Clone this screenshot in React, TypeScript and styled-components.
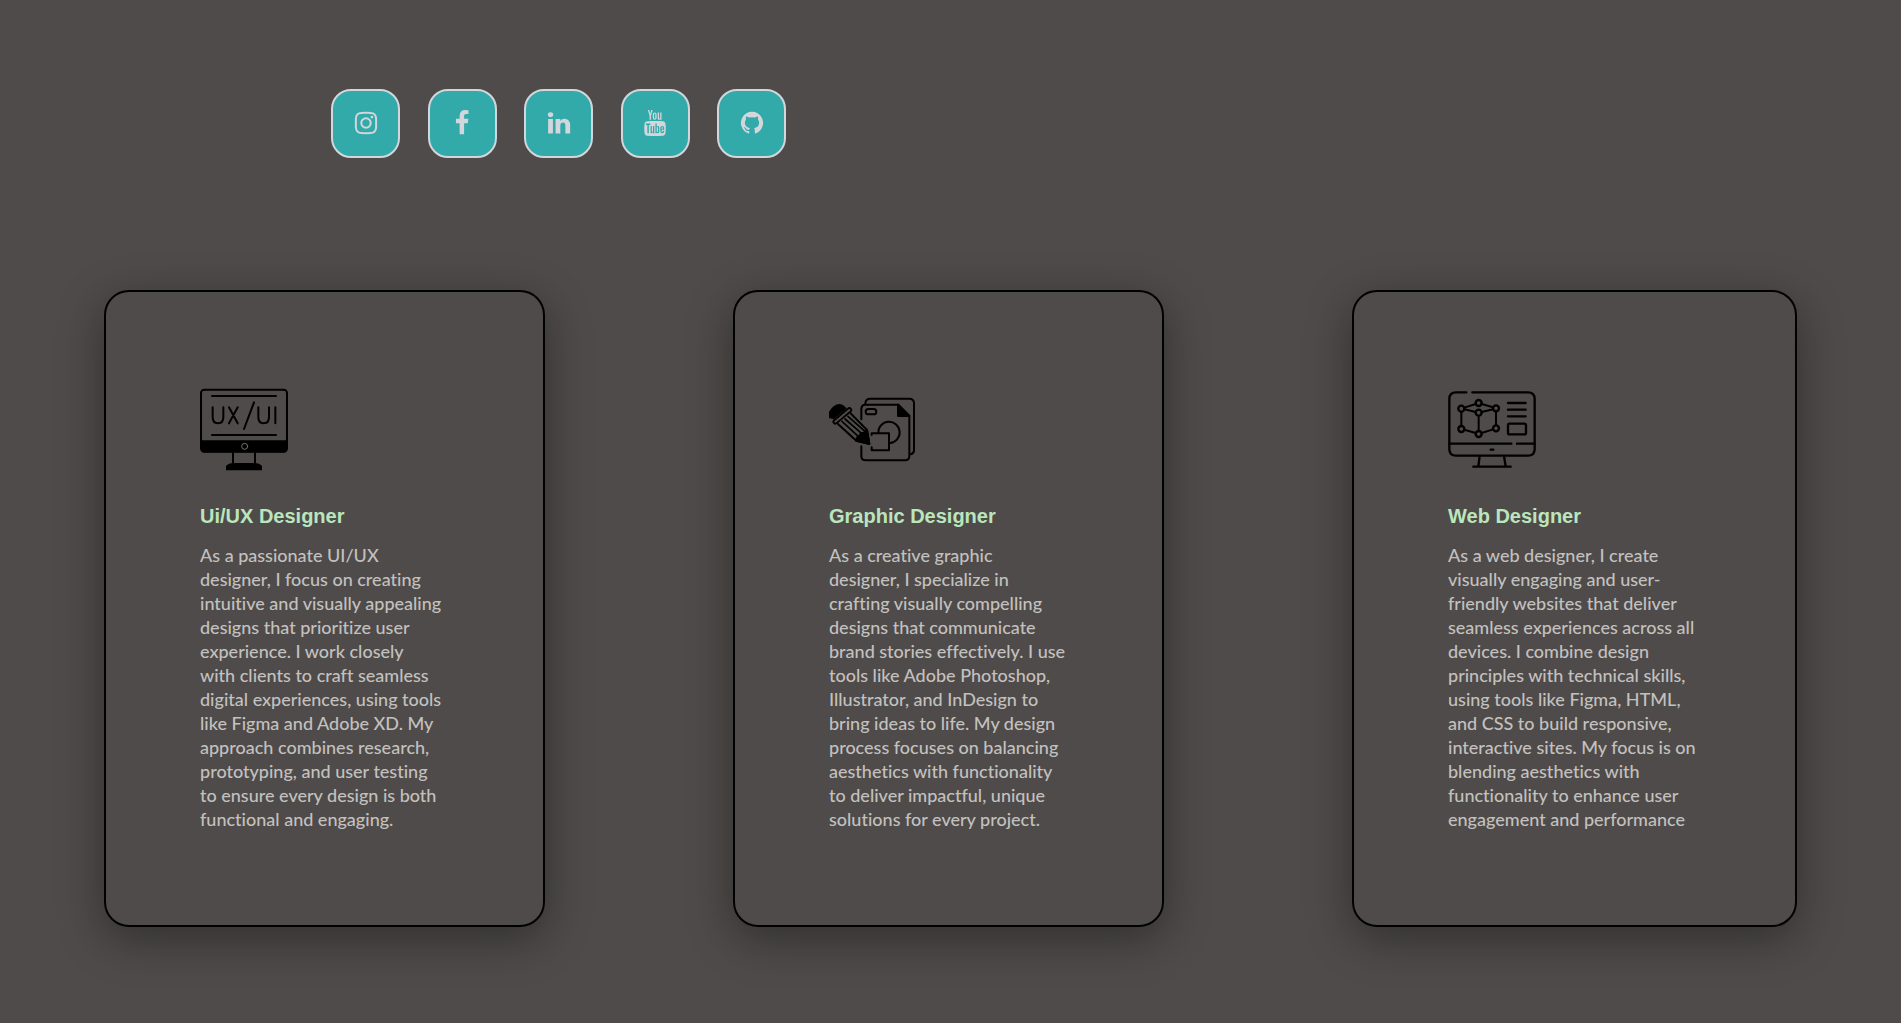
import React from "react";
import styled, { createGlobalStyle } from "styled-components";
import { TfiYoutube } from "react-icons/tfi";

const GlobalStyle = createGlobalStyle`
  * { box-sizing: border-box; }
  body { margin: 0; background: #4f4b4a; font-family: "Liberation Sans", Arial, sans-serif; }
`;

const Page = styled.main`
  min-height: 100vh;
  padding: 89px 104px 96px;
`;

const SocialList = styled.ul`
  display: flex;
  justify-content: space-between;
  list-style: none;
  max-width: 455px;
  margin: 0 0 132px 227px;
  padding: 0;
`;

const SocialLink = styled.a`
  display: flex;
  align-items: center;
  justify-content: center;
  width: 69px;
  height: 69px;
  padding-bottom: 2px;
  border: 2px solid #d3d6da;
  border-radius: 20px;
  background: #33aaaa;
  color: #d3d6da;

  svg { width: 26px; height: 26px; fill: currentColor; }
`;

const Cards = styled.section`
  display: flex;
  gap: 188px;
`;

const Card = styled.article<{ $grow: number }>`
  flex: ${(p) => p.$grow} 1 0;
  padding: 94px;
  border: 2px solid #000;
  border-radius: 25px;
  box-shadow: 0 12px 45px rgba(0, 10, 0, 0.4);
`;

const Art = styled.svg`
  display: block;
  width: 88px;
  height: 88px;
  fill: none;
  stroke: #000;
  stroke-linecap: round;
  stroke-linejoin: round;
`;

const Title = styled.h2`
  margin: 30px 0 15px;
  color: #bbe6bd;
  font-size: 20px;
  line-height: 24px;
`;

const Copy = styled.p`
  margin: 0;
  color: #c3c1bf;
  font-family: "Gill Sans", "Gill Sans MT", Lato, sans-serif;
  font-size: 18px;
  font-weight: 500;
  font-variant-ligatures: none;
  line-height: 24px;
  white-space: pre;
`;

const UxArt = () => (
  <Art viewBox="30 18 264 264" strokeWidth="6" aria-hidden="true">
    <rect x="33" y="29" width="258" height="186" rx="10" />
    <path d="M33 181H291V206Q291 217 281 217H43Q33 217 33 206Z" fill="#000" stroke="none" />
    <path d="M66 48H258M66 165H258M129 218V250M195 218V250" />
    <path d="M68 82V112Q68 130 84 130Q100 130 100 112V82M117 82L143 130M143 82L117 130M192 67L162 147M205 82V112Q205 130 221 130Q237 130 237 112V82M256 82V130" />
    <path d="M108 271V258Q116 249 130 249H194Q208 249 216 258V271Z" fill="#000" stroke="none" />
    <circle cx="164" cy="199" r="9" stroke="#77736f" strokeWidth="3" />
  </Art>
);

const GraphicArt = () => (
  <Art viewBox="30 18 264 264" strokeWidth="6" aria-hidden="true">
    <path d="M139 70Q140 56 153 56H271Q285 56 285 70V210Q285 221 275 223" />
    <path d="M127 118V87Q127 74 140 74H238L271 108V228Q271 241 258 241H140Q127 241 127 228V199" />
    <path d="M237 74V108H271Z" fill="#000" />
    <rect x="140" y="87" width="32" height="16" rx="8" />
    <path d="M178 158A32 32 0 1 1 213 189" />
    <path d="M158 165V160H210V211H158V202" />
    <path d="M56 131L112 182L151 191L144 150L95 100" />
    <path d="M151 192L112 182Q112 170 122 169Q122 158 134 158L144 150Z" fill="#000" />
    <path d="M69 124L121 172M78 117L131 163M87 109L138 154" strokeWidth="5" />
    <path d="M33 112Q31 103 33 96Q45 76 62 75Q71 76 79 85L44 114Z" fill="#000" />
    <path d="M49 125L91 90" strokeWidth="17" />
    <path d="M49 125L91 90" stroke="#4f4b4a" strokeWidth="6" />
  </Art>
);

const WebArt = () => (
  <Art viewBox="24 18 264 264" strokeWidth="7" aria-hidden="true">
    <path d="M79 37H48Q28 37 28 57V207Q28 227 48 227H264Q284 227 284 207V57Q284 37 264 37H97" />
    <path d="M29 191H214M231 191H283M119 228L115 259M192 228L197 259M100 260H212M152 209H160" />
    <path d="M204 69H257M204 89H257M204 109H257" />
    <rect x="204" y="131" width="54" height="32" rx="5" />
    <path d="M64 96V137M168 96V135M116 109V152M73 83L107 72M125 72L159 82M73 88L107 96M125 96L159 88M73 149L107 159M125 159L159 148" strokeWidth="6" />
    <circle cx="116" cy="69" r="9" />
    <circle cx="64" cy="86" r="9" />
    <circle cx="168" cy="85" r="9" />
    <circle cx="116" cy="98" r="9" />
    <circle cx="64" cy="147" r="9" />
    <circle cx="168" cy="145" r="9" />
    <circle cx="116" cy="162" r="9" />
  </Art>
);

const Glyph = ({ d }: { d: string }) => (
  <svg viewBox="0 0 1792 1792" aria-hidden="true"><path d={d} /></svg>
);

const socials = [
  { name: "Instagram", icon: <Glyph d="M1152 896q0-106-75-181t-181-75-181 75-75 181 75 181 181 75 181-75 75-181zm138 0q0 164-115 279t-279 115-279-115-115-279 115-279 279-115 279 115 115 279zm108-410q0 38-27 65t-65 27-65-27-27-65 27-65 65-27 65 27 27 65zm-502-220q-7 0-76.5-.5t-105.5 0-96.5 3-103 10-71.5 18.5q-50 20-88 58t-58 88q-11 29-18.5 71.5t-10 103-3 96.5 0 105.5.5 76.5-.5 76.5 0 105.5 3 96.5 10 103 18.5 71.5q20 50 58 88t88 58q29 11 71.5 18.5t103 10 96.5 3 105.5 0 76.5-.5 76.5.5 105.5 0 96.5-3 103-10 71.5-18.5q50-20 88-58t58-88q11-29 18.5-71.5t10-103 3-96.5 0-105.5-.5-76.5.5-76.5 0-105.5-3-96.5-10-103-18.5-71.5q-20-50-58-88t-88-58q-29-11-71.5-18.5t-103-10-96.5-3-105.5 0-76.5.5zm768 630q0 229-5 317-10 208-124 322t-322 124q-88 5-317 5t-317-5q-208-10-322-124t-124-322q-5-88-5-317t5-317q10-208 124-322t322-124q88-5 317-5t317 5q208 10 322 124t124 322q5 88 5 317z" /> },
  { name: "Facebook", icon: <Glyph d="M1343 12v264h-157q-86 0-116 36t-30 108v189h293l-39 296h-254v759h-306v-759h-255v-296h255v-218q0-186 104-288.5t277-102.5q147 0 228 12z" /> },
  { name: "LinkedIn", icon: <Glyph d="M477 625v991h-330v-991h330zm21-306q1 73-50.5 122t-135.5 49h-2q-82 0-132-49t-50-122q0-74 51.5-122.5t134.5-48.5 133 48.5 51 122.5zm1166 729v568h-329v-530q0-105-40.5-164.5t-126.5-59.5q-63 0-105.5 34.5t-63.5 85.5q-11 30-11 81v553h-329q2-399 2-647t-1-296l-1-48h329v144h-2q20-32 41-56t56.5-52 87-43.5 114.5-15.5q171 0 275 113.5t104 332.5z" /> },
  { name: "YouTube", icon: <TfiYoutube /> },
  { name: "GitHub", icon: <Glyph d="M896 128q209 0 385.5 103t279.5 279.5 103 385.5q0 251-146.5 451.5t-378.5 277.5q-27 5-40-7t-13-30q0-3 .5-76.5t.5-134.5q0-97-52-142 57-6 102.5-18t94-39 81-66.5 53-105 20.5-150.5q0-119-79-206 37-91-8-204-28-9-81 11t-92 44l-38 24q-93-26-192-26t-192 26q-16-11-42.5-27t-83.5-38.5-85-13.5q-45 113-8 204-79 87-79 206 0 85 20.5 150t52.5 105 80.5 67 94 39 102.5 18q-39 36-49 103-21 10-45 15t-57 5-65.5-21.5-55.5-62.5q-19-32-48.5-52t-49.5-24l-20-3q-21 0-29 4.5t-5 11.5 9 14 13 12l7 5q22 10 43.5 38t31.5 51l10 23q13 38 44 61.5t67 30 69.5 7 55.5-3.5l23-4q0 38 .5 88.5t.5 54.5q0 18-13 30t-40 7q-232-77-378.5-277.5t-146.5-451.5q0-209 103-385.5t279.5-279.5 385.5-103z" /> },
];

const services = [
  {
    title: "Ui/UX Designer",
    grow: 249,
    art: <UxArt />,
    copy: `As a passionate UI/UX
designer, I focus on creating
intuitive and visually appealing
designs that prioritize user
experience. I work closely
with clients to craft seamless
digital experiences, using tools
like Figma and Adobe XD. My
approach combines research,
prototyping, and user testing
to ensure every design is both
functional and engaging.`,
  },
  {
    title: "Graphic Designer",
    grow: 239,
    art: <GraphicArt />,
    copy: `As a creative graphic
designer, I specialize in
crafting visually compelling
designs that communicate
brand stories effectively. I use
tools like Adobe Photoshop,
Illustrator, and InDesign to
bring ideas to life. My design
process focuses on balancing
aesthetics with functionality
to deliver impactful, unique
solutions for every project.`,
  },
  {
    title: "Web Designer",
    grow: 253,
    art: <WebArt />,
    copy: `As a web designer, I create
visually engaging and user-
friendly websites that deliver
seamless experiences across all
devices. I combine design
principles with technical skills,
using tools like Figma, HTML,
and CSS to build responsive,
interactive sites. My focus is on
blending aesthetics with
functionality to enhance user
engagement and performance`,
  },
];

export default function App() {
  return (
    <Page>
      <GlobalStyle />
      <SocialList>
        {socials.map((s) => (
          <li key={s.name}>
            <SocialLink href="#" aria-label={s.name}>{s.icon}</SocialLink>
          </li>
        ))}
      </SocialList>
      <Cards>
        {services.map((s) => (
          <Card key={s.title} $grow={s.grow}>
            {s.art}
            <Title>{s.title}</Title>
            <Copy>{s.copy}</Copy>
          </Card>
        ))}
      </Cards>
    </Page>
  );
}
